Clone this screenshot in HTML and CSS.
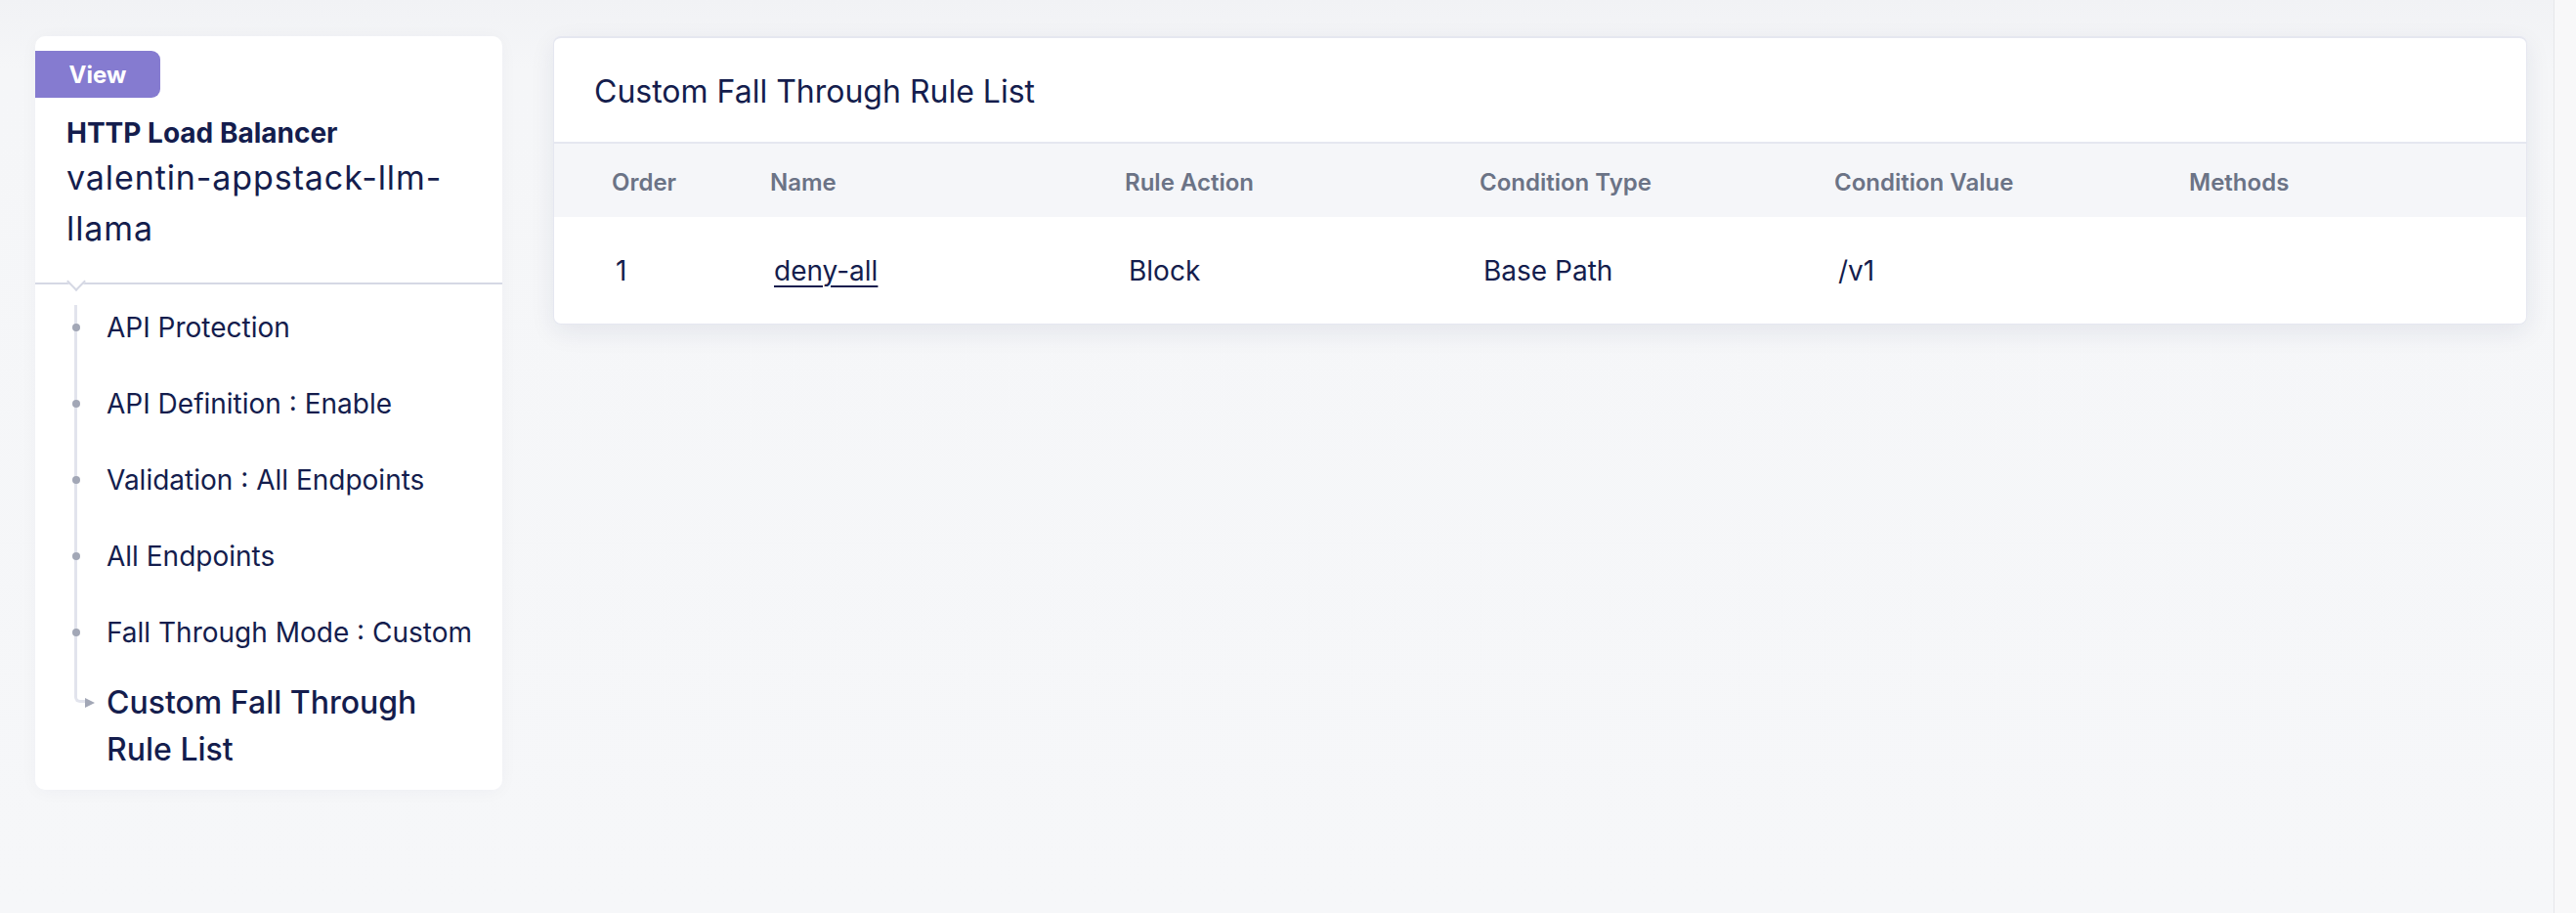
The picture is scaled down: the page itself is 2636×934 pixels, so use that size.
FILE: index.html
```html
<!DOCTYPE html>
<html lang="en">
<head>
<meta charset="utf-8">
<title>Custom Fall Through Rule List</title>
<link rel="stylesheet" href="styles.css">
</head>
<body>
<div class="page">
  <main class="main">
    <aside class="sidebar">
      <div class="sidebar-head">
        <span class="badge">View</span>
        <div class="kind">HTTP Load Balancer</div>
        <div class="object-name">valentin-appstack-llm-llama</div>
      </div>
      <ul class="tree">
        <li class="tree-item">API Protection</li>
        <li class="tree-item">API Definition : Enable</li>
        <li class="tree-item">Validation : All Endpoints</li>
        <li class="tree-item">All Endpoints</li>
        <li class="tree-item">Fall Through Mode : Custom</li>
        <li class="tree-item current">Custom Fall Through Rule List</li>
      </ul>
    </aside>
    <section class="panel">
      <header class="panel-head">
        <h2 class="panel-title">Custom Fall Through Rule List</h2>
      </header>
      <div class="table">
        <div class="row head-row">
          <div class="cell">Order</div>
          <div class="cell">Name</div>
          <div class="cell">Rule Action</div>
          <div class="cell">Condition Type</div>
          <div class="cell">Condition Value</div>
          <div class="cell">Methods</div>
        </div>
        <div class="row data-row">
          <div class="cell">1</div>
          <div class="cell"><a class="link" href="#">deny-all</a></div>
          <div class="cell">Block</div>
          <div class="cell">Base Path</div>
          <div class="cell">/v1</div>
          <div class="cell"></div>
        </div>
      </div>
    </section>
  </main>
  <div class="scroll-track"></div>
</div>
</body>
</html>
```
FILE: styles.css
```css
* { box-sizing: border-box; }

html, body {
  margin: 0;
  padding: 0;
}

body {
  font-family: Inter, "Noto Sans", "Liberation Sans", sans-serif;
  color: #141d4d;
  background: linear-gradient(#f1f2f5 0, #f5f6f8 70px, #f6f7f9 100%);
  min-height: 934px;
}

.page {
  display: flex;
  min-height: 934px;
}

.main {
  flex: 1;
  display: flex;
  align-items: flex-start;
  gap: 52px;
  padding: 37px 27px 0 36px;
}

.scroll-track {
  width: 23px;
  background: #f8f8f9;
  border-left: 1px solid #e6e7ea;
}

/* ---------- Sidebar ---------- */
.sidebar {
  width: 478px;
  flex: none;
  background: #fff;
  border-radius: 10px;
  box-shadow: 0 2px 18px rgba(30, 40, 90, 0.035);
  padding-bottom: 17px;
}

.sidebar-head {
  position: relative;
  padding: 15px 32px 29px 32px;
  border-bottom: 2px solid #d5d8e4;
}

.sidebar-head::after {
  content: "";
  position: absolute;
  left: 35px;
  bottom: -6px;
  width: 12px;
  height: 12px;
  background: #fff;
  border-right: 2px solid #d5d8e4;
  border-bottom: 2px solid #d5d8e4;
  transform: rotate(45deg);
}

.badge {
  display: flex;
  align-items: center;
  justify-content: center;
  width: 128px;
  height: 48px;
  margin-left: -32px;
  background: #857bd0;
  color: #fff;
  font-size: 24px;
  font-weight: 700;
  border-radius: 0 9px 9px 0;
}

.kind {
  margin-top: 16px;
  font-size: 28px;
  line-height: 40px;
  font-weight: 700;
}

.object-name {
  font-size: 34px;
  line-height: 52px;
  font-weight: 400;
  letter-spacing: 0.9px;
}

.tree {
  position: relative;
  list-style: none;
  margin: 0;
  padding: 24px 24px 0 73px;
}

.tree::before {
  content: "";
  position: absolute;
  left: 40px;
  top: 21px;
  bottom: 72px;
  width: 12px;
  border-left: 3px solid #e2e4ed;
  border-bottom: 3px solid #e2e4ed;
  border-bottom-left-radius: 6px;
}

.tree-item {
  position: relative;
  font-size: 28px;
  line-height: 40px;
  margin-bottom: 38px;
}

.tree-item::before {
  content: "";
  position: absolute;
  left: -35px;
  top: 16px;
  width: 8px;
  height: 8px;
  border-radius: 50%;
  background: #a2a7b6;
}

.tree-item:nth-child(5) {
  margin-bottom: 28px;
}

.tree-item.current {
  font-size: 32px;
  line-height: 48px;
  font-weight: 500;
  margin-bottom: 0;
}

.tree-item.current::before {
  left: -22px;
  top: 19px;
  width: 0;
  height: 0;
  border-radius: 0;
  background: none;
  border-left: 10px solid #a2a7b6;
  border-top: 5px solid transparent;
  border-bottom: 5px solid transparent;
}

/* ---------- Panel ---------- */
.panel {
  flex: 1;
  min-width: 0;
  background: #fff;
  border: 1px solid #e5e7f0;
  border-top-width: 2px;
  border-radius: 8px;
  box-shadow: 0 8px 26px rgba(30, 40, 90, 0.08);
  overflow: hidden;
}

.panel-head {
  height: 108px;
  display: flex;
  align-items: center;
  padding: 4px 41px 0 41px;
  border-bottom: 2px solid #e5e7f0;
}

.panel-title {
  margin: 0;
  font-size: 32px;
  line-height: 48px;
  font-weight: 400;
}

.row {
  display: grid;
  grid-template-columns: 203px repeat(5, 1fr);
  align-items: center;
}

.head-row {
  height: 75px;
  padding-top: 3px;
  background: #f5f6f9;
  color: #6b7386;
  font-size: 24px;
  font-weight: 600;
}

.head-row .cell { padding-left: 18px; }
.head-row .cell:first-child { padding-left: 59px; }

.data-row {
  height: 109px;
  font-size: 28px;
  font-weight: 400;
}

.data-row .cell { padding-left: 22px; }
.data-row .cell:first-child { padding-left: 63px; }

.link {
  color: #141d4d;
  text-decoration: underline;
  text-decoration-thickness: 2px;
  text-underline-offset: 5px;
}
```
